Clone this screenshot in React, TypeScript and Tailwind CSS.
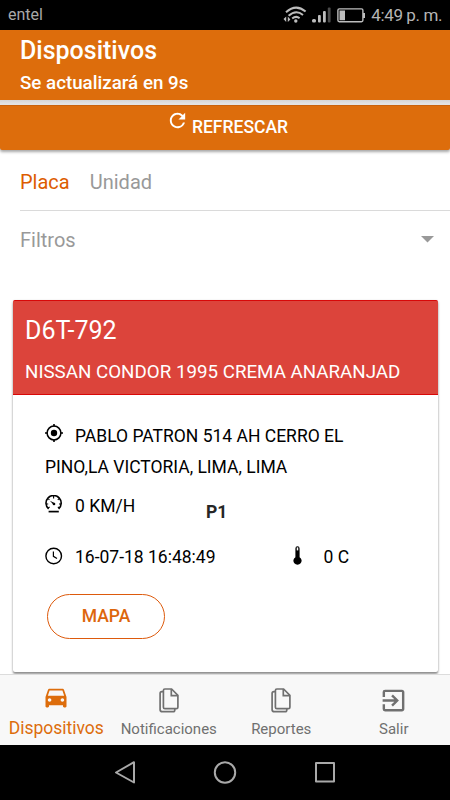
import React from "react";
import { MdRefresh, MdDirectionsCar, MdExitToApp } from "react-icons/md";

interface Tab {
    label: string,
    icon: React.ReactNode,
    active?: boolean
}

function StatusBar() {
    return (
        <div className="h-[30px] shrink-0 bg-black flex items-center justify-between pl-2 pr-[8px] text-[#a9a9a9]">
            <div className="text-base leading-[32px]">entel</div>
            <div className="flex items-center">
                <svg className="w-6 h-[18px]" viewBox="0 0 24 18" fill="none">
                    <path d="M3 6.2Q13 -2.6 22.6 5.6M5.6 9.8Q13 3.2 20 9M9.2 12.6Q13 9.4 16.6 12.2" stroke="#bdbdbd" strokeWidth="2" />
                    <circle cx="12.8" cy="15" r="1.7" fill="#bdbdbd" />
                    <path d="M3.2 10.5V16L.5 13ZM4.8 16V10.5L7.4 13.5Z" fill="#bdbdbd" />
                </svg>
                <svg className="w-5 h-4 ml-[4px]" viewBox="0 0 20 16">
                    <rect x="1" y="12" width="4" height="3.5" rx="1.5" fill="#bdbdbd" />
                    <rect x="7" y="8" width="2.8" height="7.5" rx="1" fill="#bdbdbd" />
                    <rect x="12" y="4" width="2.8" height="11.5" rx="1" fill="#bdbdbd" />
                    <rect x="16.8" y="0.5" width="2.8" height="15" rx="1" fill="#4a4a4a" />
                </svg>
                <svg className="w-7 h-[15px] ml-[6px]" viewBox="0 0 28 15" fill="none">
                    <rect x=".9" y=".9" width="25" height="12.8" rx="1.4" stroke="#bdbdbd" strokeWidth="1.4" />
                    <path d="M2.5 2.5H8V12.2H2.5ZM26 5H28V10H26Z" fill="#bdbdbd" />
                </svg>
                <div className="ml-[6px] text-[17px] tracking-[-0.4px] leading-[33px] text-[#b5b5b5]">4:49 p. m.</div>
            </div>
        </div>
    )
}

function Target() {
    return (
        <svg className="inline-block align-[0px] w-[18px] h-[18px] mr-3" viewBox="0 0 18 18" fill="none" stroke="#000">
            <circle cx="9" cy="9" r="6.9" strokeWidth="1.5" />
            <path d="M9 0V2.4M9 15.6V18M0 9H2.4M15.6 9H18" strokeWidth="1.6" />
            <circle cx="9" cy="9" r="3.2" fill="#000" stroke="none" />
        </svg>
    )
}

function Clock() {
    return (
        <svg className="w-[18px] h-[18px] -mt-[4px]" viewBox="0 0 18 18" fill="none" stroke="#000">
            <circle cx="8.7" cy="9" r="7.8" strokeWidth="1.4" />
            <path d="M8.4 4.5V9.3L12 11.6" strokeWidth="1.2" />
        </svg>
    )
}

function Speedometer() {
    return (
        <svg className="w-[18px] h-[18px]" viewBox="0 0 18 18" fill="none" stroke="#000">
            <path d="M3.6 13.8A7.6 7.6 0 1 1 13.6 13.8" strokeWidth="1.6" />
            <path d="M3.6 16.6H13.8" strokeWidth="1.7" />
            <path d="M8.6 1V3.4M3.4 3.8L4.4 4.8M14 3.6L12.8 4.8M1.2 9H3.2M14 9H16M3.2 13L4.6 12M14.4 13L12.8 12" strokeWidth="1.1" />
            <path d="M4.9 5.7L10 8.3L8.7 10Z" fill="#000" stroke="none" />
            <circle cx="9" cy="9" r="1.3" fill="#000" stroke="none" />
        </svg>
    )
}

function Thermometer() {
    return (
        <svg className="w-[9px] h-[19px] -mt-[4px]" viewBox="0 0 9 19">
            <path d="M2.4 2.4a2.1 2.1 0 0 1 4.2 0V11.2a4.1 4.1 0 1 1-4.2 0Z" fill="#000" />
            <path d="M4.5 1.4V4.4" stroke="#fff" strokeWidth="1.5" />
        </svg>
    )
}

function Copy() {
    return (
        <svg className="w-5 h-[25px]" viewBox="0 0 20 25" fill="none" stroke="#707070" strokeWidth="1.7">
            <path d="M5.9 1H12.6L18.9 7.3V19.2Q18.9 20.7 17.4 20.7H5.9Q4.4 20.7 4.4 19.2V2.5Q4.4 1 5.9 1Z" />
            <path d="M12.3 1V7.6H18.9" />
            <path d="M4.4 3.6H2.9Q1.1 3.6 1.1 5.4V21.4Q1.1 23.7 3.3 23.7H14Q15.8 23.7 15.8 22V20.7" />
        </svg>
    )
}

const tabs: Tab[] = [
    { label: "Dispositivos", icon: <MdDirectionsCar className="w-[28px] h-[28px] -mt-[6px]" />, active: true },
    { label: "Notificaciones", icon: <Copy /> },
    { label: "Reportes", icon: <Copy /> },
    { label: "Salir", icon: <MdExitToApp className="w-[29px] h-[29px]" /> },
]

export default function App() {
    return (
        <div className="w-[450px] h-[800px] overflow-hidden flex flex-col bg-white font-['Roboto',sans-serif]">
            <StatusBar />
            <div className="h-[70px] shrink-0 bg-[#dd6d0c] text-white font-medium pl-5 pt-[5px]">
                <div className="text-[25px] leading-8">Dispositivos</div>
                <div className="text-[18.75px] leading-[33px]">Se actualizará en 9s</div>
            </div>
            <div className="h-[5px] shrink-0 bg-gradient-to-b from-[#d5d5d5] to-[#e8e8e8]"></div>
            <button className="h-[45px] shrink-0 bg-[#dd6d0c] border-t border-[#c9620b] rounded-b-[2px] shadow-[0_2px_3px_rgba(0,0,0,0.35)] text-white font-medium text-[17.5px] flex justify-center pl-[4px]">
                <MdRefresh className="w-[23px] h-[23px] mt-[3px] mr-[3px]" />
                <span className="leading-[42px]">REFRESCAR</span>
            </button>

            <div className="h-[524px] shrink-0 overflow-hidden">
                <div className="ml-5 h-[61px] border-b border-[#dadada] flex gap-5 text-[20px] leading-[65px] text-[#999]">
                    <div className="text-[#dd5c00]">Placa</div>
                    <div>Unidad</div>
                </div>
                <div className="h-[89px] pl-5 pr-4 flex justify-between text-[20px] leading-[58px] text-[#999]">
                    <div>Filtros</div>
                    <svg className="w-[13px] h-[7px] mt-[25px]" viewBox="0 0 13 7"><path d="M0 0H13L6.5 6.5Z" fill="#999" /></svg>
                </div>
                <div className="mx-[12.5px] h-[372px] rounded-[2px] bg-white shadow-[0_2px_2px_rgba(0,0,0,0.35),0_1px_3px_rgba(0,0,0,0.2)]">
                    <div className="h-[95px] rounded-t-[2px] border-y border-[#d80808] bg-[#dc443b] text-white pl-[12.5px] pt-[10px]">
                        <div className="text-[25px] leading-10">D6T-792</div>
                        <div className="text-[18.75px] leading-[43px]">NISSAN CONDOR 1995 CREMA ANARANJAD</div>
                    </div>
                    <div className="pl-[32.5px] pt-[26px] text-[17.5px] text-black">
                        <div className="leading-[31px]">
                            <Target />
                            PABLO PATRON 514 AH CERRO EL<br />PINO,LA VICTORIA, LIMA, LIMA
                        </div>
                        <div className="h-[46px] flex leading-[46px]">
                            <div className="w-[30px] pt-[12px]"><Speedometer /></div>
                            <div className="w-[131px]">0 KM/H</div>
                            <div className="font-bold leading-[59px] text-[#262626]">P1</div>
                        </div>
                        <div className="h-[57px] flex items-center">
                            <div className="w-[30px]"><Clock /></div>
                            <div className="w-[217.5px]">16-07-18 16:48:49</div>
                            <div className="w-[31px]"><Thermometer /></div>
                            <div>0 C</div>
                        </div>
                        <button className="mt-[8px] ml-[2px] w-[118px] h-[45px] rounded-full border border-[#dd5a0c] text-[#dd660c] font-medium flex justify-center leading-[42px]">MAPA</button>
                    </div>
                </div>
            </div>

            <div className="h-[71px] shrink-0 border-t border-[#dcdcdc] bg-[#f8f8f8] grid grid-cols-4 z-10">
                {tabs.map((tab, index) => (
                    <div key={index} className={tab.active ? "flex flex-col items-center text-[#dd6d0c] text-[17.5px] leading-[20px]" : "flex flex-col items-center text-[#707070] text-[15px] leading-[22px]"}>
                        <div className="h-[43px] pt-[7px] flex items-center">{tab.icon}</div>
                        <div className="whitespace-nowrap">{tab.label}</div>
                    </div>
                ))}
            </div>
            <div className="h-[55px] shrink-0 bg-black">
                <svg className="w-[450px] h-[55px]" viewBox="0 0 450 55" fill="none" stroke="#a9a9a9" strokeWidth="2" strokeLinejoin="round">
                    <path d="M134 17.2V37.5L116 27.5Z" />
                    <circle cx="225" cy="27.5" r="10.2" />
                    <rect x="316" y="18" width="18" height="18.6" />
                </svg>
            </div>
        </div>
    )
}
